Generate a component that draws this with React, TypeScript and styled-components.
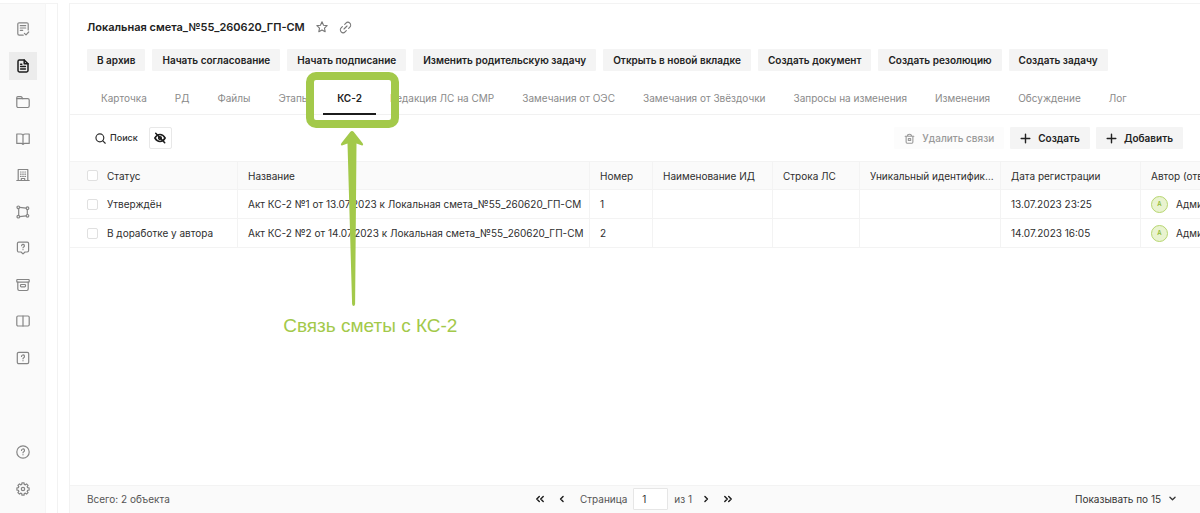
import React from "react";
import styled, { createGlobalStyle, css } from "styled-components";

const green = "#a3c94a";

const GlobalStyle = createGlobalStyle`
  *, *::before, *::after { box-sizing: border-box; }
  body {
    margin: 0;
    background: #fff;
    color: #2e2e2e;
    font-family: Inter, "Noto Sans", sans-serif;
    font-size: 10px;
    line-height: 16px;
  }
  button, input, select { font: inherit; color: inherit; margin: 0; }
`;

const Page = styled.div`
  display: flex;
  min-height: 100vh;
  border-top: 3px solid #fff;
  overflow: hidden;
`;

const Sidebar = styled.nav`
  flex: none;
  width: 46px;
  padding: 11px 9px 10px;
  display: flex;
  flex-direction: column;
  justify-content: space-between;
  gap: 24px;
  background: #fafafa;
  border-top: 1px solid #f3f3f3;
  border-right: 1px solid #f5f5f5;
`;

const NavGroup = styled.div<{ $height: number }>`
  display: flex;
  flex-direction: column;
  justify-content: space-between;
  min-height: ${(p) => p.$height}px;
`;

const NavButton = styled.button<{ $active?: boolean }>`
  width: 28px;
  height: 28px;
  padding: 0;
  border: 0;
  display: grid;
  place-items: center;
  background: ${(p) => (p.$active ? "#ececec" : "transparent")};
  color: ${(p) => (p.$active ? "#1c1c1c" : "#858585")};
`;

const CollapsedPane = styled.div`
  flex: none;
  width: 12px;
  border-top: 1px solid #f3f3f3;
  border-right: 1px solid #f2f2f2;
`;

const Main = styled.main`
  flex: 1;
  min-width: 0;
  margin-left: 11px;
  display: flex;
  flex-direction: column;
  border-top: 1px solid #f3f3f3;
  border-left: 1px solid #f2f2f2;
`;

const TitleBar = styled.header`
  display: flex;
  align-items: center;
  gap: 10px;
  padding: 15px 17px 0;
`;

const Title = styled.h1`
  margin: 0;
  font-size: 11px;
  line-height: 16px;
  font-weight: 600;
  color: #222;
`;

const IconButton = styled.button`
  padding: 0;
  border: 0;
  background: none;
  display: grid;
  place-items: center;
  min-width: 14px;
  height: 14px;
  color: #777;
`;

const Actions = styled.div`
  display: flex;
  gap: 7px;
  padding: 14px 17px 0;
`;

const Button = styled.button<{ $muted?: boolean }>`
  height: 22px;
  padding: 0 10px;
  border: 0;
  border-radius: 1px;
  display: flex;
  align-items: center;
  gap: 7px;
  white-space: nowrap;
  font-weight: 600;
  background: #f4f4f4;
  color: #222;
  ${(p) =>
    p.$muted &&
    css`
      font-weight: 500;
      background: #fcfcfc;
      color: #999;
    `}
`;

const Tabs = styled.div`
  display: flex;
  height: 44px;
  padding: 0 17px;
  border-bottom: 1px solid #f1f1f1;
`;

const TabItem = styled.div`
  position: relative;
  display: flex;
`;

const Tab = styled.button<{ $active?: boolean }>`
  height: 44px;
  padding: 18px 14px 8px;
  border: 0;
  background: none;
  white-space: nowrap;
  line-height: 16px;
  color: #8a8a8a;
  ${(p) =>
    p.$active &&
    css`
      position: relative;
      font-weight: 600;
      color: #222;
      &::after {
        content: "";
        position: absolute;
        inset: auto 0 0;
        height: 2px;
        background: #1c1c1c;
      }
    `}
`;

const Highlight = styled.div`
  position: absolute;
  z-index: 2;
  inset: 1px -23px -14px -17px;
  border: 8px solid ${green};
  border-radius: 10px;
  pointer-events: none;
`;

const Callout = styled.div`
  position: absolute;
  z-index: 2;
  top: 60px;
  left: -40px;
  display: flex;
  flex-direction: column;
  pointer-events: none;
`;

const Arrow = styled.svg`
  margin-left: 57px;
`;

const CalloutText = styled.span`
  margin-top: 8px;
  white-space: nowrap;
  font-family: "Liberation Sans", Arial, sans-serif;
  font-size: 19px;
  line-height: 24px;
  color: ${green};
`;

const Toolbar = styled.div`
  display: flex;
  align-items: center;
  gap: 6px;
  padding: 12px 17px;
`;

const Search = styled.button`
  padding: 0 5px 0 8px;
  border: 0;
  background: none;
  display: flex;
  align-items: center;
  gap: 4px;
  font-size: 9px;
  font-weight: 500;
`;

const ToggleHidden = styled.button`
  width: 23px;
  height: 22px;
  padding: 0;
  display: grid;
  place-items: center;
  border: 1px solid #e8e8e8;
  border-radius: 2px;
  background: #fff;
  color: #1c1c1c;
`;

const Spacer = styled.div`
  flex: 1;
`;

const TableArea = styled.div`
  flex: 1;
  overflow: hidden;
`;

const Table = styled.table`
  width: 1240px;
  min-width: 100%;
  table-layout: fixed;
  border-collapse: separate;
  border-spacing: 0;
`;

const cell = css`
  height: 29px;
  padding: 0 0 0 10px;
  text-align: left;
  font-weight: 400;
  border-right: 1px solid #f3f3f3;
  border-bottom: 1px solid #f3f3f3;
  overflow: hidden;
  white-space: nowrap;
  text-overflow: ellipsis;
  &:first-child { padding-left: 17px; }
`;

const HeadCell = styled.th`
  ${cell}
  padding-right: 4px;
  background: #fafafa;
  border-top: 1px solid #f3f3f3;
`;

const Cell = styled.td`
  ${cell}
`;

const CheckLabel = styled.label`
  display: flex;
  align-items: center;
  gap: 9px;
`;

const Checkbox = styled.input`
  appearance: none;
  width: 11px;
  height: 11px;
  border: 1px solid #e0e0e0;
  border-radius: 2px;
  background: #fff;
`;

const Person = styled.div`
  display: flex;
  align-items: center;
  gap: 8px;
`;

const Avatar = styled.span`
  width: 17px;
  height: 17px;
  display: grid;
  place-items: center;
  border: 1px solid #b7d670;
  border-radius: 50%;
  background: #e9f3d0;
  color: #8fba35;
  font-size: 6px;
  line-height: 8px;
  font-weight: 600;
`;

const Footer = styled.footer`
  display: grid;
  grid-template-columns: 1fr auto 1fr;
  align-items: center;
  height: 28px;
  padding: 0 23px 2px 17px;
  border-top: 1px solid #f3f3f3;
  background: #fafafa;
  color: #555;
`;

const Pager = styled.div`
  display: flex;
  align-items: center;
  gap: 6px;
  padding-left: 4px;
`;

const PageArrow = styled(IconButton)`
  width: 16px;
  color: #1c1c1c;
`;

const PageLabel = styled.label`
  display: flex;
  align-items: center;
  gap: 6px;
  margin-left: 4px;
`;

const PageInput = styled.input`
  width: 35px;
  height: 22px;
  padding: 0 8px;
  border: 1px solid #e6e6e6;
  border-radius: 1px;
  background: #fff;
  color: #333;
`;

const PageSize = styled.label`
  justify-self: end;
  display: flex;
  align-items: center;
  gap: 6px;
  color: #333;
`;

const PageSizeSelect = styled.select`
  appearance: none;
  padding: 0;
  border: 0;
  background: none;
`;

type IconProps = { size?: number; width?: number; children: React.ReactNode };

const Icon = ({ size = 14, width = 1.2, children }: IconProps) => (
  <svg
    width={size}
    height={size}
    viewBox="0 0 14 14"
    fill="none"
    stroke="currentColor"
    strokeWidth={width}
    strokeLinecap="round"
    strokeLinejoin="round"
    aria-hidden="true"
  >
    {children}
  </svg>
);

const question = (
  <>
    <path d="M5.500 5.500a1.500 1.500 0 1 1 2.200 1.300c-.5.300-.7.500-.7 1" />
    <path d="M7 9.700v.1" />
  </>
);

const NAV: { label: string; active?: boolean; icon: React.ReactNode }[] = [
  {
    label: "Задачи",
    icon: (
      <Icon>
        <path d="M12.2 8V2.2c0-.8-.6-1.4-1.4-1.4H3.2c-.8 0-1.400.6-1.400 1.400v9.600c0 .8.6 1.400 1.400 1.400h4" />
        <path d="M4.300 3.700h5.400M4.300 6h5.400M4.300 8.300h2.400M8.400 11.300l1.600 1.600 2.700-2.900" />
      </Icon>
    ),
  },
  {
    label: "Документы",
    active: true,
    icon: (
      <Icon width={1.5}>
        <path d="M8.200 1H3.400c-.8 0-1.400.6-1.400 1.400v9.200c0 .8.6 1.400 1.400 1.400h7.200c.8 0 1.400-.6 1.400-1.400V4.800z" />
        <path d="M8.200 1v3.800H12M4.600 5.200h1.200M4.600 7.600h4.800M4.600 10h4.800" />
      </Icon>
    ),
  },
  {
    label: "Папки",
    icon: (
      <Icon>
        <path d="M.8 11V2.600c0-.6.400-1 1-1h3.100c.4 0 .7.200.9.500l.9 1.600h5.100c.8 0 1.400.6 1.400 1.400v6c0 .8-.6 1.400-1.400 1.400H2.200c-.8 0-1.400-.7-1.400-1.500z" />
        <path d="M.8 3.700h5.900" />
      </Icon>
    ),
  },
  {
    label: "Справочник",
    icon: (
      <Icon>
        <path d="M7 3.200C6.500 2.400 5.800 2 4.800 2H.8v9.400h4.400c.8 0 1.400.3 1.800 1 .4-.7 1-1 1.800-1h4.400V2H9.200c-1 0-1.700.4-2.200 1.200zM7 3.200v9.200" />
      </Icon>
    ),
  },
  {
    label: "Организации",
    icon: (
      <Icon>
        <path d="M2.200 12.500V1.500h9.600v11M.8 12.500h12.400" />
        <path d="M4.500 4h.6M6.700 4h.6M8.900 4h.6M4.500 6.200h.6M6.700 6.200h.6M8.900 6.200h.6M4.500 8.400h.6M6.700 8.400h.6M8.900 8.400h.6M5.300 12.500v-2h3.400v2" />
      </Icon>
    ),
  },
  {
    label: "Процессы",
    icon: (
      <Icon>
        <circle cx="2.300" cy="2.300" r="1.300" />
        <circle cx="11.500" cy="3.200" r="1.300" />
        <circle cx="2.300" cy="11.700" r="1.300" />
        <circle cx="11.500" cy="10.800" r="1.300" />
        <path d="M3.600 2.400l6.600.7M2.700 3.600v6.800M11.300 4.500v5M3.600 11.600l6.600-.7" />
      </Icon>
    ),
  },
  {
    label: "Вопросы",
    icon: (
      <Icon>
        <path d="M2.800 1.200h8.400c.8 0 1.400.6 1.400 1.400v7c0 .8-.6 1.400-1.400 1.400H9l-2 1.900L5 11H2.800c-.8 0-1.400-.6-1.400-1.400v-7c0-.8.6-1.400 1.400-1.400z" />
        <path d="M5.600 4.700a1.400 1.400 0 1 1 2.100 1.200c-.5.300-.7.500-.7.900" />
        <path d="M7 8.600v.1" />
      </Icon>
    ),
  },
  {
    label: "Архив",
    icon: (
      <Icon>
        <rect x=".8" y="1.500" width="12.400" height="2.600" rx=".6" />
        <path d="M1.800 4.100v7c0 .8.6 1.400 1.400 1.400h7.600c.8 0 1.400-.6 1.400-1.400v-7" />
        <rect x="4.500" y="6.500" width="5" height="2.400" rx=".8" />
      </Icon>
    ),
  },
  {
    label: "Журнал",
    icon: (
      <Icon>
        <rect x=".8" y="2" width="12.400" height="10" rx="1.200" />
        <path d="M7 2v10" />
      </Icon>
    ),
  },
  {
    label: "Инструкции",
    icon: (
      <Icon>
        <rect x="1.300" y="1.300" width="11.400" height="11.400" rx="1.400" />
        {question}
      </Icon>
    ),
  },
];

const ACTIONS = [
  "В архив",
  "Начать согласование",
  "Начать подписание",
  "Изменить родительскую задачу",
  "Открыть в новой вкладке",
  "Создать документ",
  "Создать резолюцию",
  "Создать задачу",
];

const TABS = [
  "Карточка",
  "РД",
  "Файлы",
  "Этапы",
  "КС-2",
  "Редакция ЛС на СМР",
  "Замечания от ОЭС",
  "Замечания от Звёздочки",
  "Запросы на изменения",
  "Изменения",
  "Обсуждение",
  "Лог",
];

const COLUMNS: [string, number][] = [
  ["Статус", 168],
  ["Название", 352],
  ["Номер", 63],
  ["Наименование ИД", 120],
  ["Строка ЛС", 87],
  ["Уникальный идентификатор", 141],
  ["Дата регистрации", 140],
  ["Автор (ответственный)", 169],
];

const ROWS = [
  {
    status: "Утверждён",
    name: "Акт КС-2 №1 от 13.07.2023 к Локальная смета_№55_260620_ГП-СМ",
    number: "1",
    date: "13.07.2023 23:25",
  },
  {
    status: "В доработке у автора",
    name: "Акт КС-2 №2 от 14.07.2023 к Локальная смета_№55_260620_ГП-СМ",
    number: "2",
    date: "14.07.2023 16:05",
  },
];

const PlusIcon = () => (
  <Icon size={11} width={1.8}>
    <path d="M7 1.500v11M1.500 7h11" />
  </Icon>
);

export default function App() {
  return (
    <>
      <GlobalStyle />
      <Page>
        <Sidebar aria-label="Разделы">
          <NavGroup $height={357}>
            {NAV.map((n) => (
              <NavButton key={n.label} $active={n.active} aria-label={n.label}>
                {n.icon}
              </NavButton>
            ))}
          </NavGroup>
          <NavGroup $height={65}>
            <NavButton aria-label="Помощь">
              <Icon>
                <circle cx="7" cy="7" r="6.200" />
                {question}
              </Icon>
            </NavButton>
            <NavButton aria-label="Настройки">
              <Icon>
                <path
                  transform="translate(7 7)"
                  d="M-1.080-6.100L1.080-6.100L1.240-4.640L2.400-4.160L3.560-5.080L5.080-3.560L4.160-2.400L4.640-1.240L6.100-1.080L6.100 1.080L4.640 1.240L4.160 2.400L5.080 3.560L3.560 5.080L2.400 4.160L1.240 4.640L1.080 6.100L-1.080 6.100L-1.240 4.640L-2.400 4.160L-3.560 5.080L-5.080 3.560L-4.160 2.400L-4.640 1.240L-6.100 1.080L-6.100-1.080L-4.640-1.240L-4.160-2.400L-5.080-3.560L-3.560-5.080L-2.400-4.160L-1.240-4.640Z"
                />
                <circle cx="7" cy="7" r="1.700" />
              </Icon>
            </NavButton>
          </NavGroup>
        </Sidebar>
        <CollapsedPane />
        <Main>
          <TitleBar>
            <Title>Локальная смета_№55_260620_ГП-СМ</Title>
            <IconButton aria-label="В избранное">
              <Icon size={12} width={1.3}>
                <path d="M7 1l1.800 3.900 4.200.5-3.100 2.900.8 4.200L7 10.400l-3.700 2.100.8-4.200L1 5.400l4.200-.5z" />
              </Icon>
            </IconButton>
            <IconButton aria-label="Скопировать ссылку">
              <Icon size={13} width={1.2}>
                <g transform="translate(7 7) rotate(-45)">
                  <path d="M-1.800 3H-3.600a3 3 0 0 1 0-6H-1.800M1.800-3H3.600a3 3 0 0 1 0 6H1.800M-2.300 0H2.300" />
                </g>
              </Icon>
            </IconButton>
          </TitleBar>
          <Actions>
            {ACTIONS.map((a) => (
              <Button key={a}>{a}</Button>
            ))}
          </Actions>
          <Tabs role="tablist">
            {TABS.map((t) => {
              const active = t === "КС-2";
              return (
                <TabItem key={t}>
                  <Tab role="tab" aria-selected={active} $active={active}>
                    {t}
                  </Tab>
                  {active && (
                    <>
                      <Highlight />
                      <Callout>
                        <Arrow width="24" height="175" viewBox="0 0 24 175" fill={green} aria-hidden="true">
                          <path d="M12 0Q13 0 14 1.200L22.500 12Q24 14.500 22 14.500L16.500 12.500L15.100 173Q14.800 175 13.600 175Q12.400 175 12.100 173L7.500 12.500L2 14.500Q0 14.500 1.500 12L10 1.200Q11 0 12 0Z" />
                        </Arrow>
                        <CalloutText>Связь сметы с КС-2</CalloutText>
                      </Callout>
                    </>
                  )}
                </TabItem>
              );
            })}
          </Tabs>
          <Toolbar>
            <Search>
              <Icon size={11} width={1.5}>
                <circle cx="6.200" cy="6.200" r="5" />
                <path d="M10 10l3 3" />
              </Icon>
              Поиск
            </Search>
            <ToggleHidden aria-label="Скрытые записи">
              <Icon size={12} width={1.8}>
                <path d="M1 7C2.500 4.400 4.500 3 7 3s4.500 1.400 6 4c-1.500 2.600-3.500 4-6 4S2.500 9.600 1 7z" />
                <circle cx="7" cy="7" r="1.500" />
                <path d="M2 1.500l10.500 11" />
              </Icon>
            </ToggleHidden>
            <Spacer />
            <Button $muted>
              <Icon size={11} width={1.4}>
                <path d="M1.500 4.200h11M4.300 4.200c0-1.700 1-2.700 2.700-2.700s2.700 1 2.700 2.700M2.700 4.200v7.400c0 .8.500 1.400 1.300 1.400h6c.8 0 1.300-.6 1.300-1.400V4.200M5.500 7.200h3v2.400h-3z" />
              </Icon>
              Удалить связи
            </Button>
            <Button>
              <PlusIcon />
              Создать
            </Button>
            <Button>
              <PlusIcon />
              Добавить
            </Button>
          </Toolbar>
          <TableArea>
            <Table>
              <colgroup>
                {COLUMNS.map(([name, w]) => (
                  <col key={name} width={w} />
                ))}
              </colgroup>
              <thead>
                <tr>
                  {COLUMNS.map(([name], i) => (
                    <HeadCell key={name} scope="col">
                      {i === 0 ? (
                        <CheckLabel>
                          <Checkbox type="checkbox" />
                          {name}
                        </CheckLabel>
                      ) : (
                        name
                      )}
                    </HeadCell>
                  ))}
                </tr>
              </thead>
              <tbody>
                {ROWS.map((r) => (
                  <tr key={r.number}>
                    <Cell>
                      <CheckLabel>
                        <Checkbox type="checkbox" />
                        {r.status}
                      </CheckLabel>
                    </Cell>
                    <Cell>{r.name}</Cell>
                    <Cell>{r.number}</Cell>
                    <Cell />
                    <Cell />
                    <Cell />
                    <Cell>{r.date}</Cell>
                    <Cell>
                      <Person>
                        <Avatar>А</Avatar>
                        Администратор
                      </Person>
                    </Cell>
                  </tr>
                ))}
              </tbody>
            </Table>
          </TableArea>
          <Footer>
            <span>Всего: 2 объекта</span>
            <Pager>
              <PageArrow aria-label="Первая страница">
                <Icon size={10} width={2}>
                  <path d="M6 3.500L2.500 7 6 10.500M11.500 3.500L8 7l3.500 3.500" />
                </Icon>
              </PageArrow>
              <PageArrow aria-label="Предыдущая страница">
                <Icon size={10} width={2}>
                  <path d="M8.500 3.500L5 7l3.500 3.500" />
                </Icon>
              </PageArrow>
              <PageLabel>
                Страница
                <PageInput type="text" defaultValue="1" />
              </PageLabel>
              <span>из 1</span>
              <PageArrow aria-label="Следующая страница">
                <Icon size={10} width={2}>
                  <path d="M5.500 3.500L9 7l-3.500 3.500" />
                </Icon>
              </PageArrow>
              <PageArrow aria-label="Последняя страница">
                <Icon size={10} width={2}>
                  <path d="M2.500 3.500L6 7l-3.500 3.500M8 3.500L11.500 7 8 10.500" />
                </Icon>
              </PageArrow>
            </Pager>
            <PageSize>
              <PageSizeSelect aria-label="Записей на странице" defaultValue="15">
                <option value="15">Показывать по 15</option>
              </PageSizeSelect>
              <Icon size={9} width={2}>
                <path d="M3 5l4 4 4-4" />
              </Icon>
            </PageSize>
          </Footer>
        </Main>
      </Page>
    </>
  );
}
